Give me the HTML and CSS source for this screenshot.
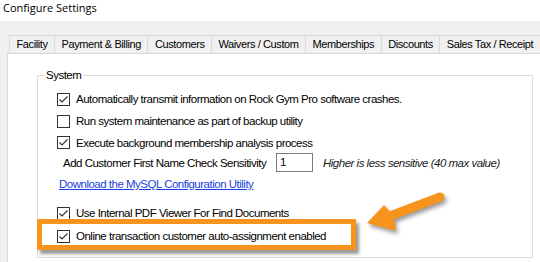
FILE: index.html
```html
<!DOCTYPE html>
<html>
<head>
<meta charset="utf-8">
<link rel="stylesheet" href="styles.css">
</head>
<body>
<div class="screen">
  <div class="titlebar">Configure Settings</div>
  <div class="window">
    <div class="tabs">
      <div class="tab">Facility</div>
      <div class="tab">Payment &amp; Billing</div>
      <div class="tab">Customers</div>
      <div class="tab">Waivers / Custom</div>
      <div class="tab">Memberships</div>
      <div class="tab">Discounts</div>
      <div class="tab">Sales Tax / Receipt</div>
    </div>
    <div class="panel">
      <div class="group">
        <div class="legend">System</div>
        <div class="row r1"><span class="cb checked"><svg viewBox="0 0 11 11"><polyline points="1.5,5.5 4,8 9.5,2.5"/></svg></span><span>Automatically transmit information on Rock Gym Pro software crashes.</span></div>
        <div class="row r2"><span class="cb"></span><span>Run system maintenance as part of backup utility</span></div>
        <div class="row r3"><span class="cb checked"><svg viewBox="0 0 11 11"><polyline points="1.5,5.5 4,8 9.5,2.5"/></svg></span><span>Execute background membership analysis process</span></div>
        <div class="row r4"><span class="label">Add Customer First Name Check Sensitivity</span><span class="input">1</span><span class="hint">Higher is less sensitive (40 max value)</span></div>
        <div class="row r5"><a class="link" href="#">Download the MySQL Configuration Utility</a></div>
        <div class="row r6"><span class="cb checked"><svg viewBox="0 0 11 11"><polyline points="1.5,5.5 4,8 9.5,2.5"/></svg></span><span>Use Internal PDF Viewer For Find Documents</span></div>
        <div class="row r7"><span class="cb checked"><svg viewBox="0 0 11 11"><polyline points="1.5,5.5 4,8 9.5,2.5"/></svg></span><span>Online transaction customer auto-assignment enabled</span></div>
      </div>
    </div>
  </div>
  <div class="highlight"></div>
  <svg class="arrow" width="110" height="70" viewBox="0 0 110 70">
    <line x1="40" y1="36" x2="90" y2="17" stroke="#f7941d" stroke-width="9" stroke-linecap="round"/>
    <polygon points="17,43 34,25 41,33 44,39 46,51" fill="#f7941d"/>
  </svg>
</div>
</body>
</html>
```
FILE: styles.css
```css
html, body {
  margin: 0;
  padding: 0;
}
body {
  background: #f0f0f0;
  font-family: "Liberation Sans", Arial, sans-serif;
  color: #000;
}
.screen {
  position: relative;
  width: 540px;
  height: 262px;
  overflow: hidden;
  background: #f0f0f0;
}
.titlebar {
  height: 21px;
  background: #ffffff;
  padding-left: 3px;
  font-family: "Open Sans", "Noto Sans", sans-serif;
  font-size: 11px;
  line-height: 15px;
  color: #000;
  box-sizing: border-box;
}
.window {
  padding: 14px 0 0 7px;
}
.tabs {
  display: flex;
  margin-left: 2px;
  height: 18px;
}
.tab {
  box-sizing: border-box;
  height: 18px;
  padding: 0 6.5px;
  border: 1px solid #d9d9d9;
  border-bottom: none;
  border-left: none;
  background: #f0f0f0;
  font-size: 11px;
  letter-spacing: -0.4px;
  line-height: 17px;
  color: #000;
  white-space: nowrap;
}
.tab:first-child {
  border-left: 1px solid #d9d9d9;
}
.panel {
  background: #ffffff;
  border: 1px solid #d9d9d9;
  border-right: none;
  height: 220px;
  padding: 21px 0 0 29px;
  box-sizing: border-box;
  width: 560px;
}
.group {
  position: relative;
  width: 496px;
  box-sizing: border-box;
  border: 1px solid #dcdcdc;
  padding: 12px 0 9px 19px;
  font-size: 11.5px;
  letter-spacing: -0.5px;
}
.legend {
  position: absolute;
  top: -8px;
  left: 6px;
  padding: 0 2px;
  background: #ffffff;
  line-height: 14px;
}
.row {
  display: flex;
  align-items: center;
  white-space: nowrap;
  height: 22px;
}
.r3 { height: 21px; }
.r4 { height: 19px; padding-left: 6px; }
.r5 { height: 24px; padding-left: 2px; }
.r6 { margin-top: 6px; }
.r7 { height: 24px; }
.cb {
  display: inline-block;
  box-sizing: border-box;
  width: 13px;
  height: 13px;
  border: 1px solid #333333;
  background: #ffffff;
  margin-right: 6px;
  flex: none;
}
.cb svg {
  display: block;
  width: 11px;
  height: 11px;
}
.cb polyline {
  fill: none;
  stroke: #333333;
  stroke-width: 1.2;
}
.label {
  width: 213px;
  flex: none;
}
.input {
  box-sizing: border-box;
  width: 37px;
  height: 19px;
  border: 1px solid #7a7a7a;
  padding-left: 3px;
  line-height: 17px;
  flex: none;
}
.hint {
  margin-left: 10px;
  font-style: italic;
  color: #1a1a1a;
}
.link {
  color: #1a3fe0;
  text-decoration: underline;
}
.highlight {
  position: absolute;
  left: 37px;
  top: 219px;
  width: 319px;
  height: 31px;
  box-sizing: border-box;
  border: 5px solid #f7941d;
  box-shadow: 3px 4px 3px rgba(0, 0, 0, 0.4);
}
.arrow {
  position: absolute;
  left: 350px;
  top: 180px;
  filter: drop-shadow(2px 3px 2px rgba(0, 0, 0, 0.4));
}
```
